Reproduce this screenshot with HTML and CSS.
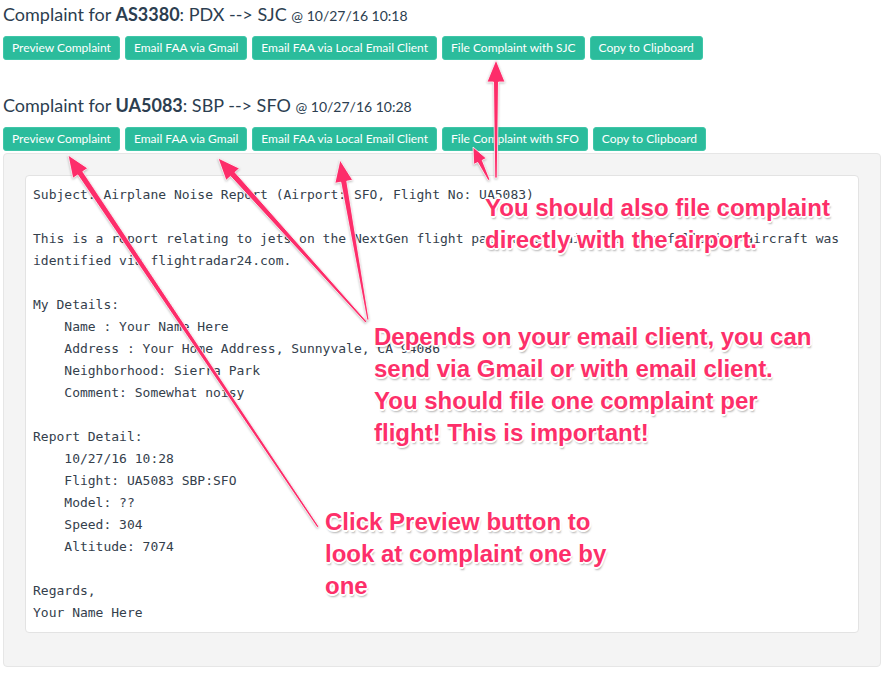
FILE: index.html
```html
<!DOCTYPE html>
<html lang="en">
<head>
    <meta charset="UTF-8">
    <meta name="viewport" content="width=device-width, initial-scale=1.0">
    <title>Airplane Noise Complaints</title>
    <link rel="stylesheet" href="styles.css">
</head>
<body>
    <div class="page">
        <section class="complaint">
            <h3 class="complaint-title">Complaint for <b>AS3380</b>: PDX --&gt; SJC <small>@ 10/27/16 10:18</small></h3>
            <div class="actions">
                <button class="btn">Preview Complaint</button>
                <button class="btn">Email FAA via Gmail</button>
                <button class="btn">Email FAA via Local Email Client</button>
                <button class="btn">File Complaint with SJC</button>
                <button class="btn">Copy to Clipboard</button>
            </div>
        </section>

        <section class="complaint">
            <h3 class="complaint-title">Complaint for <b>UA5083</b>: SBP --&gt; SFO <small>@ 10/27/16 10:28</small></h3>
            <div class="actions">
                <button class="btn">Preview Complaint</button>
                <button class="btn">Email FAA via Gmail</button>
                <button class="btn">Email FAA via Local Email Client</button>
                <button class="btn">File Complaint with SFO</button>
                <button class="btn">Copy to Clipboard</button>
            </div>
            <div class="well">
<pre class="preview">Subject: Airplane Noise Report (Airport: SFO, Flight No: UA5083)

This is a report relating to jets on the NextGen flight path to SFO airport. The following aircraft was
identified via flightradar24.com.

My Details:
    Name : Your Name Here
    Address : Your Home Address, Sunnyvale, CA 94086
    Neighborhood: Sierra Park
    Comment: Somewhat noisy

Report Detail:
    10/27/16 10:28
    Flight: UA5083 SBP:SFO
    Model: ??
    Speed: 304
    Altitude: 7074

Regards,
Your Name Here</pre>
            </div>
        </section>
    </div>

    <!-- Skitch-style notes drawn over the page -->
    <div class="notes">
        <svg class="arrows" width="888" height="675" viewBox="0 0 888 675">
            <polygon points="318.83,526.44 82.76,171.59 87.74,168.24 68,155 72.80,178.28 77.78,174.93 317.17,527.56"/>
            <polygon points="366.74,321.33 234.97,172.32 239.42,168.30 218,158 226.06,180.36 230.51,176.34 365.26,322.67"/>
            <polygon points="368.99,319.83 346.75,181.15 352.66,180.12 340,160 334.92,183.22 340.83,182.19 367.01,320.17"/>
            <polygon points="497.2,178 498.5,82 505,82 496,60 487,82 493.5,82 494.8,178"/>
            <polygon points="489.9,179.56 482.23,160.29 486.27,158.33 473,147 473.69,164.43 477.73,162.47 488.1,180.44"/>
        </svg>
        <p class="note note-airport">You should also file complaint<br>directly with the airport.</p>
        <p class="note note-email">Depends on your email client, you can<br>send via Gmail or with email client.<br>You should file one complaint per<br>flight! This is important!</p>
        <p class="note note-preview">Click Preview button to<br>look at complaint one by<br>one</p>
    </div>
</body>
</html>
```

FILE: styles.css
```css
/* General styles */
body {
    margin: 0;
    font-family: 'Lato', 'Open Sans', sans-serif;
    color: #2c3e50;
    background: #fff;
}

.page {
    padding: 4px 7px 0 3px;
}

.complaint + .complaint {
    margin-top: 35px;
}

.complaint-title {
    margin: 0 0 10px;
    font-size: 18px;
    line-height: 20px;
    font-weight: normal;
}

.complaint-title b {
    font-weight: bold;
}

.complaint-title small {
    font-size: 14px;
}

.actions {
    display: flex;
    gap: 5px;
}

.btn {
    height: 24px;
    padding: 0 8px;
    background: #2bbc9c; /* flatly green */
    color: #fff;
    border: 1px solid #3fc6a8;
    border-radius: 3px;
    font-family: 'Lato', sans-serif;
    font-size: 12px;
    line-height: 22px;
    cursor: pointer;
}

.well {
    margin-top: 2px;
    padding: 21px 21px 35px;
    background: #f4f4f4;
    border: 1px solid #e6e6e6;
    border-radius: 4px;
    height: 514px;
    box-sizing: border-box;
}

.preview {
    margin: 0;
    padding: 8px 7px;
    background: #fff;
    border: 1px solid #e3e3e3;
    border-radius: 4px;
    font-family: 'DejaVu Sans Mono', monospace;
    font-size: 13px;
    line-height: 22px;
    color: #34404c;
    white-space: pre;
    overflow: hidden;
}

/* Annotation layer */
.notes {
    position: absolute;
    top: 0;
    left: 0;
    width: 888px;
    height: 675px;
    pointer-events: none;
}

.arrows {
    position: absolute;
    top: 0;
    left: 0;
}

.arrows polygon {
    fill: #fd2d6a;
    stroke: #fff;
    stroke-width: 0.8;
    stroke-linejoin: round;
    filter: drop-shadow(0 1px 1px rgba(0, 0, 0, 0.25));
}

.note {
    position: absolute;
    margin: 0;
    font-family: 'Liberation Sans', Arial, sans-serif;
    font-weight: bold;
    font-size: 24px;
    line-height: 32px;
    color: #fd2f69;
    white-space: nowrap;
    text-shadow:
        -1px -1px 0 #fff, 1px -1px 0 #fff, -1px 1px 0 #fff, 1px 1px 0 #fff,
        0 -2px 0 #fff, 0 2px 0 #fff, -2px 0 0 #fff, 2px 0 0 #fff,
        1px 3px 2px rgba(0, 0, 0, 0.3);
}

.note-airport {
    left: 485px;
    top: 192px;
}

.note-email {
    left: 374px;
    top: 321px;
}

.note-preview {
    left: 325px;
    top: 506px;
}
```
